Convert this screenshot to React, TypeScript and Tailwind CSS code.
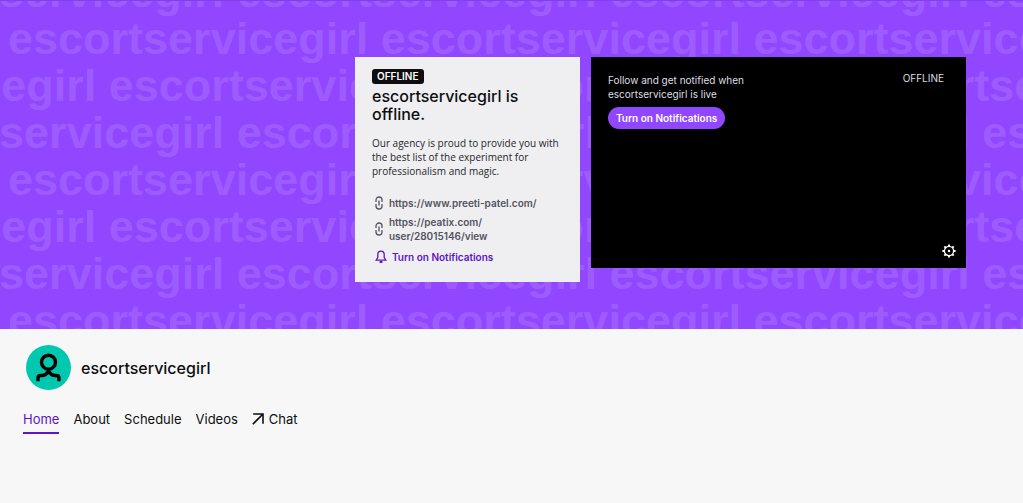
import type { ReactNode } from "react"

const CHANNEL = "escortservicegirl"

const ROW_OFFSETS = ["-ml-[136px]", "ml-2", "-ml-[264px]"]

const LINKS = [
  { href: "https://www.preeti-patel.com/", lines: ["https://www.preeti-patel.com/"] },
  { href: "https://peatix.com/user/28015146/view", lines: ["https://peatix.com/", "user/28015146/view"] },
]

const TABS = ["Home", "About", "Schedule", "Videos"]

function LinkIcon() {
  return (
    <svg viewBox="0 0 8 14" className="w-2 h-3.5 shrink-0" fill="none" stroke="currentColor" strokeWidth="1.3">
      <path d="M1 6V4a3 3 0 0 1 6 0v2M1 8v2a3 3 0 0 0 6 0V8M4 4.5v5" />
    </svg>
  )
}

function BellIcon() {
  return (
    <svg viewBox="0 0 12 14" className="w-3 h-3.5 shrink-0" fill="none" stroke="currentColor" strokeWidth="1.3">
      <path d="M1.2 10.2h9.6L9.2 7.6V4.4a3.2 3.2 0 0 0-6.4 0v3.2z" />
      <path d="M4.6 12h2.8" strokeWidth="2" />
    </svg>
  )
}

function GearIcon() {
  return (
    <svg viewBox="0 0 14 14" className="w-3.5 h-3.5" fill="none" stroke="currentColor">
      <circle cx="7" cy="7" r="4.6" strokeWidth="1.3" />
      <circle cx="7" cy="7" r="1.2" fill="currentColor" stroke="none" />
      <path
        d="M7 .4v2M7 11.6v2M.4 7h2M11.6 7h2M2.3 2.3l1.5 1.5M10.2 10.2l1.5 1.5M2.3 11.7l1.5-1.5M10.2 3.8l1.5-1.5"
        strokeWidth="1.9"
      />
    </svg>
  )
}

function ArrowIcon() {
  return (
    <svg viewBox="0 0 12 12" className="w-3 h-3" fill="none" stroke="currentColor" strokeWidth="1.6">
      <path d="M1.2 1h9.8v9.8M11 1L.8 11.2" />
    </svg>
  )
}

function Avatar() {
  return (
    <svg viewBox="0 0 45 45" className="w-[45px] h-[45px]" aria-hidden="true">
      <circle cx="22.5" cy="22.5" r="22.5" fill="#00c8af" />
      <g fill="none" stroke="#000" strokeWidth="3.4">
        <circle cx="22.5" cy="17.2" r="7" />
        <path d="M12 36.3v-3.1c0-1.7 1.2-2.7 2.8-2.7h1.4c2.6 0 4.6-1.6 6.3-4.2 1.7 2.6 3.7 4.2 6.3 4.2h1.4c1.6 0 2.8 1 2.8 2.7v3.1" />
      </g>
    </svg>
  )
}

function Backdrop() {
  return (
    <div
      aria-hidden="true"
      className="absolute inset-x-0 -top-[33px] overflow-hidden whitespace-pre font-['Liberation_Sans',sans-serif] text-[45px] leading-[47px] font-bold text-[#9e5cff] select-none"
    >
      {Array.from({ length: 8 }, (_, i) => (
        <div key={i} className={ROW_OFFSETS[i % 3]}>
          {`${CHANNEL} `.repeat(8)}
        </div>
      ))}
    </div>
  )
}

function OfflineCard() {
  return (
    <section className="w-[225px] min-h-[225px] bg-[#efeff1] px-[17px] pt-3">
      <span className="block w-fit rounded-[3px] bg-[#0e0e10] px-[5px] text-[10px] leading-[15px] font-semibold text-white">
        OFFLINE
      </span>
      <h2 className="mt-[3px] text-base leading-[18px] font-medium text-[#0e0e10]">{CHANNEL} is offline.</h2>
      <p className="mt-[13px] font-['Open_Sans',sans-serif] text-[10px] leading-[14px] text-[#26262c]">
        Our agency is proud to provide you with the best list of the experiment for professionalism and magic.
      </p>
      <ul className="mt-[18px] flex flex-col gap-[5px] pl-[3px] text-[10px] leading-[14px] font-semibold text-[#53535f]">
        {LINKS.map(link => (
          <li key={link.href}>
            <a href={link.href} className="flex items-center gap-1.5">
              <LinkIcon />
              <span>
                {link.lines.map(line => (
                  <span key={line} className="block">{line}</span>
                ))}
              </span>
            </a>
          </li>
        ))}
      </ul>
      <button className="mt-[7px] ml-[3px] flex items-center gap-[5px] text-[10px] leading-[14px] font-semibold text-[#5c16c5]">
        <BellIcon />
        Turn on Notifications
      </button>
    </section>
  )
}

function Player() {
  return (
    <section className="flex w-[375px] aspect-video flex-col justify-between bg-black pl-[17px] pr-[10px] pt-4 pb-[10px] text-[#dedee3]">
      <div className="flex items-start justify-between pr-3">
        <div>
          <p className="w-[150px] text-[10px] leading-[14px]">Follow and get notified when {CHANNEL} is live</p>
          <button className="mt-1.5 h-[22px] rounded-full bg-[#9147ff] px-2 text-[10px] font-semibold text-white">
            Turn on Notifications
          </button>
        </div>
        <span className="text-[10px] leading-[10px]">OFFLINE</span>
      </div>
      <button aria-label="Settings" className="self-end text-white">
        <GearIcon />
      </button>
    </section>
  )
}

function Tab({ active, children }: { active?: boolean; children: ReactNode }) {
  return (
    <a
      href="#"
      className={
        active
          ? "flex items-center gap-[5px] border-b-2 border-[#5c16c5] pb-1 text-[#5c16c5]"
          : "flex items-center gap-[5px] border-b-2 border-transparent pb-1"
      }
    >
      {children}
    </a>
  )
}

export default function App() {
  return (
    <div className="min-h-screen bg-[#f7f7f8] font-[Inter,sans-serif] text-[#0e0e10]">
      <div className="relative overflow-hidden border-t border-[#8440e8] bg-[#9147ff] pt-14 pr-[57px] pb-[47px]">
        <Backdrop />
        <div className="relative flex items-start justify-end gap-[11px]">
          <OfflineCard />
          <Player />
        </div>
      </div>

      <header className="flex items-center gap-2.5 px-[26px] pt-4">
        <Avatar />
        <h1 className="text-base font-medium">{CHANNEL}</h1>
      </header>

      <nav className="mt-5 flex gap-3.5 px-[23px] text-[13px] leading-[18px]">
        {TABS.map(tab => (
          <Tab key={tab} active={tab === "Home"}>{tab}</Tab>
        ))}
        <Tab>
          <ArrowIcon />
          Chat
        </Tab>
      </nav>
    </div>
  )
}
